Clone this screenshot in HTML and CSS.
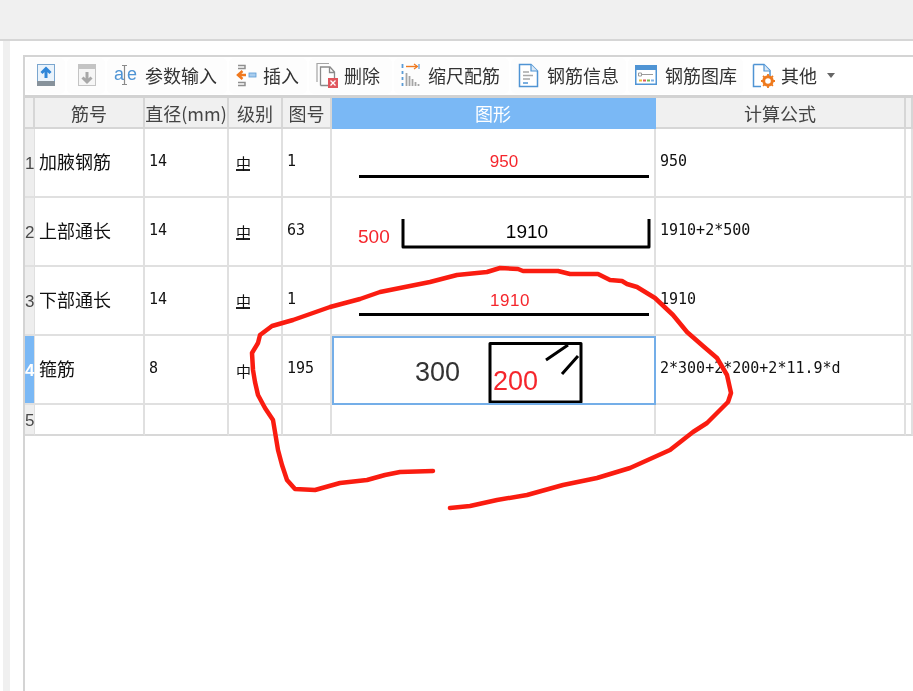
FILE: index.html

```html
<!DOCTYPE html>
<html lang="zh-CN">
<head>
  <meta charset="UTF-8">
  <title>钢筋编辑</title>
  <link rel="stylesheet" href="styles.css">
</head>
<body>
  <div class="topbar"></div>
  <div class="main">
    <div class="strip"></div>
    <div class="panel">
      <div class="toolbar">
        <div class="btn btn-icon">
          <svg width="20" height="24" viewBox="0 0 20 24"><rect x="1.5" y="1.5" width="17" height="21" fill="#eaf3fb" stroke="#7aa6cf"/><rect x="1" y="18" width="18" height="5" fill="#87929b"/><path d="M10 15V6M5.5 10L10 5.5 14.5 10" fill="none" stroke="#2f86d8" stroke-width="3"/></svg>
        </div>
        <div class="btn btn-icon">
          <svg width="20" height="24" viewBox="0 0 20 24"><rect x="1.5" y="1.5" width="17" height="21" fill="#f6f6f6" stroke="#c4c4c4"/><rect x="1" y="1" width="18" height="5" fill="#c4c4c4"/><path d="M10 9v10M5.5 14.5L10 19l4.5-4.5" fill="none" stroke="#a8a8a8" stroke-width="3"/></svg>
        </div>
        <div class="btn">
          <svg width="23" height="24" viewBox="0 0 23 24"><text x="0" y="17" class="ico-letter">a</text><text x="13" y="17" class="ico-letter">e</text><path d="M8 2.5h5M10.5 2.5v19M8 21.500h5" fill="none" stroke="#8a8a8a" stroke-width="1.200"/></svg>
          <span>参数输入</span>
        </div>
        <div class="btn btn-tight">
          <svg width="21" height="28" viewBox="0 0 21 28"><path d="M2 4.500h7v3H2M2 24.500h7v-3H2" fill="none" stroke="#8f8f8f" stroke-width="1.500"/><path d="M10 14H3M6.500 10L2 14l4.500 4" fill="none" stroke="#f0791f" stroke-width="2.500"/><rect x="13" y="12" width="7" height="4" fill="#a9cdee" stroke="#5b9bd5" stroke-width=".8"/></svg>
          <span>插入</span>
        </div>
        <div class="btn btn-tight">
          <svg width="22" height="26" viewBox="0 0 22 26"><path d="M1 20V1.500h12" fill="none" stroke="#a5a5a5" stroke-width="1.200"/><path d="M4.500 23.500V5h9.500l4.500 5v6M4.500 23.500h8M13.500 5v5.500h5" fill="none" stroke="#8a8a8a" stroke-width="1.300"/><rect x="12" y="16" width="10" height="10" fill="#e0555c"/><path d="M14.500 18.500l5 5M19.500 18.500l-5 5" stroke="#fff" stroke-width="1.300"/></svg>
          <span>删除</span>
        </div>
        <div class="btn">
          <svg width="19" height="26" viewBox="0 0 19 26"><path d="M1.500 2v4M1.500 9v3M1.500 15v3M1.500 21v3" stroke="#5b9bd5" stroke-width="1.800"/><path d="M5 4.500h11" stroke="#f0791f" stroke-width="1.400"/><path d="M13 2l3.500 2.500L13 7" fill="none" stroke="#f0791f" stroke-width="1.200"/><path d="M18 2v5" stroke="#5b9bd5" stroke-width="1.200"/><path d="M5.500 11v13M8.500 14v10M11.500 17v7M14.500 20v4M17.500 22v2" stroke="#a5a5a5" stroke-width="1.800"/></svg>
          <span>缩尺配筋</span>
        </div>
        <div class="btn">
          <svg width="21" height="25" viewBox="0 0 21 25"><path d="M1.500 1.500H13l6.500 6.500v15.500h-18z" fill="#fff" stroke="#4f94d4" stroke-width="1.500"/><path d="M13 1.500V8h6.500" fill="#dbe9f6" stroke="#4f94d4" stroke-width="1.200"/><path d="M5 9h6M5 12.500h10M5 16h7" stroke="#a8a8a8" stroke-width="1.300"/><path d="M5 20h5" stroke="#4f94d4" stroke-width="1.500"/></svg>
          <span>钢筋信息</span>
        </div>
        <div class="btn">
          <svg width="22" height="20" viewBox="0 0 22 20"><rect x=".75" y=".75" width="20.500" height="18.500" fill="#fff" stroke="#4f94d4" stroke-width="1.500"/><rect x="1" y="1" width="20" height="4" fill="#4f94d4"/><path d="M3.500 8h3v3h-3zM6.500 9.500H18" fill="none" stroke="#9a9a9a"/><path d="M4 15.500h3" stroke="#e8c23a" stroke-width="2"/><path d="M8 15.500h3" stroke="#e0555c" stroke-width="2"/><path d="M12 15.500h3" stroke="#79b84a" stroke-width="2"/><path d="M16 15.500h3" stroke="#7fb2e5" stroke-width="2"/></svg>
          <span>钢筋图库</span>
        </div>
        <div class="btn btn-more">
          <svg width="23" height="25" viewBox="0 0 23 25"><path d="M1.500 1.500H12l6 6v7M1.500 1.500v22H9" fill="none" stroke="#4f94d4" stroke-width="1.500"/><path d="M12 1.500V8h6" fill="#dbe9f6" stroke="#4f94d4" stroke-width="1.200"/><circle cx="16" cy="18" r="4.300" fill="none" stroke="#ee7a1e" stroke-width="3"/><path d="M16 11v14M9 18h14M11 13l10 10M21 13L11 23" stroke="#ee7a1e" stroke-width="1.800" stroke-dasharray="2 10"/></svg>
          <span>其他</span>
          <i class="caret"></i>
        </div>
      </div>

      <table class="grid">
        <colgroup>
          <col class="c-head"><col class="c-name"><col class="c-dia"><col class="c-grade"><col class="c-no"><col class="c-shape"><col class="c-calc"><col class="c-rest">
        </colgroup>
        <thead>
          <tr>
            <th></th><th>筋号</th><th>直径(mm)</th><th>级别</th><th>图号</th><th class="on">图形</th><th>计算公式</th><th></th>
          </tr>
        </thead>
        <tbody>
          <tr>
            <td class="rowhead">1</td>
            <td class="name">加腋钢筋</td>
            <td class="num">14</td>
            <td class="gr"><span class="grade">中</span></td>
            <td class="num">1</td>
            <td class="shape">
              <svg class="draw" viewBox="332 128 322 67">
                <text x="504" y="166" class="lab-s red" text-anchor="middle">950</text>
                <path d="M359 175.500H649" class="ink"/>
              </svg>
            </td>
            <td class="num">950</td>
            <td></td>
          </tr>
          <tr>
            <td class="rowhead">2</td>
            <td class="name">上部通长</td>
            <td class="num">14</td>
            <td class="gr"><span class="grade">中</span></td>
            <td class="num">63</td>
            <td class="shape">
              <svg class="draw" viewBox="332 197 322 67">
                <text x="358" y="242" class="lab-m red">500</text>
                <text x="527" y="237" class="lab-m" text-anchor="middle">1910</text>
                <path d="M403 218V246H649V218" class="ink"/>
              </svg>
            </td>
            <td class="num">1910+2*500</td>
            <td></td>
          </tr>
          <tr>
            <td class="rowhead">3</td>
            <td class="name">下部通长</td>
            <td class="num">14</td>
            <td class="gr"><span class="grade">中</span></td>
            <td class="num">1</td>
            <td class="shape">
              <svg class="draw" viewBox="332 266 322 67">
                <text x="510" y="305" class="lab-s lab-wide red" text-anchor="middle">1910</text>
                <path d="M359 313.500H649" class="ink"/>
              </svg>
            </td>
            <td class="num">1910</td>
            <td></td>
          </tr>
          <tr>
            <td class="rowhead on">4</td>
            <td class="name">箍筋</td>
            <td class="num">8</td>
            <td class="gr"><span class="grade plain">中</span></td>
            <td class="num">195</td>
            <td class="shape selected">
              <svg class="draw" viewBox="332 335 322 67">
                <text x="415" y="380" class="lab-l dark">300</text>
                <path d="M490 342.500H581V401H490Z" class="ink"/>
                <path d="M546 359L568 344M562 373L578 355" class="ink"/>
                <text x="493" y="389" class="lab-l red">200</text>
              </svg>
            </td>
            <td class="num">2*300+2*200+2*11.9*d</td>
            <td></td>
          </tr>
          <tr class="last">
            <td class="rowhead">5</td>
            <td></td><td></td><td></td><td></td><td></td><td></td><td></td>
          </tr>
        </tbody>
      </table>
    </div>
  </div>

  <!-- hand drawn red circle on top of the screenshot -->
  <svg class="scribble" width="913" height="691" viewBox="0 0 913 691">
    <path d="M433 471L400 472L385 475L367 480L340 483L315 490L295 489L287 480L282 465L278 450L275 432L273 420L265 408L258 395L255 382L253 370L252 353L258 343L260 335L272 326L293 320L330 307L360 299L380 292L405 287L430 282L457 275L487 272L500 268L518 269L523 271L558 271L570 274L598 274L610 280L622 281L627 284L637 287L655 298L673 315L687 332L703 346L717 358L727 375L731 393L728 402L707 423L693 432L670 450L650 459L630 468L597 478L563 485L527 495L497 500L470 506L450 508"/>
  </svg>
</body>
</html>
```

FILE: styles.css

```css
html, body {
  margin: 0;
  height: 691px;
  overflow: hidden;
  background: #fff;
}
body {
  position: relative;
  font-family: "Noto Sans CJK SC", "Liberation Sans", sans-serif;
  color: #333;
}
.topbar {
  height: 39px;
  background: #f0f0f0;
  border-bottom: 2px solid #d6d6d6;
}
.main {
  display: flex;
  height: 650px;
}
.strip {
  width: 7px;
  margin-left: 3px;
  background: #f0f0f0;
}
.panel {
  flex: 1;
  margin: 14px 0 0 13px;
  border-left: 2px solid #d4d4d4;
  border-top: 2px solid #d4d4d4;
  filter: blur(.35px);
}

/* toolbar */
.toolbar {
  display: grid;
  grid-template-columns: 41px 40px 122px 80px 85px 117px 117px 117px 100px;
  height: 38px;
  padding-left: 1px;
  border-bottom: 3px solid #d2d2d2;
}
.btn {
  display: flex;
  align-items: center;
  gap: 8px;
  margin: 1px 2px 1px 0;
  padding: 0 0 2px 7px;
  background: #fdfdfd;
  border-radius: 5px;
  font-size: 18px;
  line-height: 24px;
  white-space: nowrap;
}
.btn-icon {
  padding-left: 10px;
}
.btn-tight {
  gap: 6px;
}
.btn-more {
  gap: 6px;
  background: none;
}
.caret {
  width: 0;
  height: 0;
  margin-left: 4px;
  border: 4px solid transparent;
  border-top: 5px solid #666;
  border-bottom: 0;
}
.ico-letter {
  font-family: "Liberation Sans", sans-serif;
  font-size: 18px;
  fill: #4f94d4;
}

/* table */
.grid {
  table-layout: fixed;
  width: 888px;
  border-collapse: separate;
  border-spacing: 0;
}
.c-head { width: 10px; }
.c-name { width: 110px; }
.c-dia { width: 84px; }
.c-grade { width: 54px; }
.c-no { width: 49px; }
.c-shape { width: 324px; }
.c-calc { width: 250px; }
.c-rest { width: 7px; }

.grid th, .grid td {
  box-sizing: border-box;
  padding: 0;
  border-right: 2px solid #e0e0e0;
  border-bottom: 2px solid #e0e0e0;
  overflow: hidden;
  white-space: nowrap;
}
.grid th {
  height: 31px;
  background: #f0f0f0;
  border-color: #d6d6d6;
  font-size: 18px;
  font-weight: 400;
  line-height: 26px;
  color: #444;
}
.grid th.on {
  background: #7ab8f5;
  border-color: #7ab8f5;
  color: #fff;
}
.grid td {
  height: 69px;
  color: #111;
}
.grid .last td {
  height: 31px;
  border-bottom-color: #d8d8d8;
}
.grid .rowhead {
  padding-top: 3px;
  border-right-width: 1px;
  overflow: visible;
  background: #eee;
  font-family: "Liberation Sans", sans-serif;
  font-size: 17px;
  line-height: 24px;
  color: #4a4a4a;
  text-align: left;
}
.grid .rowhead.on {
  background: #7ab8f5;
  color: #fff;
  font-weight: 700;
}
.grid .name {
  padding: 0 0 4px 4px;
  font-size: 18px;
}
.grid .num {
  padding: 0 0 3px 4px;
  font-family: "DejaVu Sans Mono", monospace;
  font-size: 15px;
}
.grid .gr {
  padding: 0 0 4px 7px;
}
.grade {
  display: inline-block;
  vertical-align: middle;
  width: 14px;
  height: 13px;
  border-bottom: 2px solid #222;
  font-size: 15px;
  line-height: 13px;
  text-align: center;
}
.grade.plain {
  border-bottom: 0;
}
.grid .selected {
  border-right-color: #74aee8;
  border-bottom-color: #74aee8;
  box-shadow: inset 2px 2px 0 #74aee8;
}
.draw {
  display: block;
  width: 322px;
  height: 67px;
  font-family: "Liberation Sans", sans-serif;
}
.ink {
  fill: none;
  stroke: #000;
  stroke-width: 3;
  stroke-linejoin: round;
}
.red { fill: #f5262c; }
.dark { fill: #333; }
.lab-s { font-size: 17px; }
.lab-wide { letter-spacing: .5px; }
.lab-m { font-size: 19px; }
.lab-l { font-size: 27px; }

/* the pen annotation, lies over everything */
.scribble {
  position: absolute;
  left: 0;
  top: 0;
  pointer-events: none;
}
.scribble path {
  fill: none;
  stroke: #fa1c10;
  stroke-width: 4.5;
  stroke-linecap: round;
  stroke-linejoin: round;
}
```
